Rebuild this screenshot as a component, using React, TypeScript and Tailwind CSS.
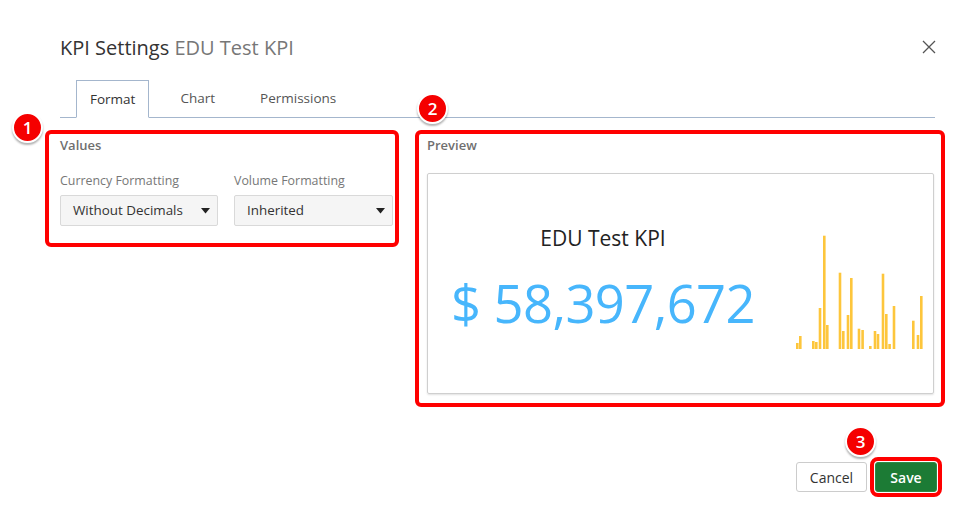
const bars = [
  [796, 342], [799, 335], [812, 340], [815, 341], [818.7, 307], [823, 234.7], [826, 324],
  [838.7, 271.7], [842, 330], [846.7, 314], [850, 277], [857.7, 327.7], [861.3, 329],
  [869, 345], [873.7, 330], [876.7, 333], [881.7, 272.7], [885, 313], [888.3, 343],
  [892.7, 305], [912, 319.7], [916.7, 334], [920, 295],
];

function Badge({ n, className }: { n: number; className: string }) {
  return (
    <div
      className={`absolute w-[31px] h-[31px] rounded-full bg-[#f50000] border-2 border-white shadow-[0_2px_2px_rgba(0,0,0,0.3)] flex items-center justify-center text-white text-[17px] font-semibold leading-none ${className}`}
    >
      {n}
    </div>
  );
}

function Select({ value, width }: { value: string; width: string }) {
  return (
    <div
      className={`${width} h-[31px] flex items-center justify-between pl-3 pr-[7px] bg-[#f5f5f5] border border-[#d9d9d9] rounded-[2px] text-[13.4px] text-[#333]`}
    >
      <span>{value}</span>
      <svg width="9" height="6" viewBox="0 0 9 6">
        <path d="M0 0 L9 0 L4.5 5.5 Z" fill="#222" />
      </svg>
    </div>
  );
}

function BarChart() {
  return (
    <svg width="140" height="120" viewBox="790 230 140 120" className="mt-[57px] ml-[12px]">
      {bars.map(([x, top], i) => (
        <rect key={i} x={x} y={top} width={2.6} height={348 - top} fill="#fdc63c" />
      ))}
    </svg>
  );
}

export default function App() {
  return (
    <div className="relative w-[967px] h-[523px] bg-white overflow-hidden font-['Open_Sans',sans-serif]">
      {/* header */}
      <div className="flex items-center justify-between pl-[60px] pr-[31px] pt-[34px]">
        <h1 className="text-[20px] leading-[28px] text-[#333]">
          KPI Settings <span className="text-[#777]">EDU Test KPI</span>
        </h1>
        <svg width="14" height="14" viewBox="0 0 14 14" className="-mt-[2px]">
          <path d="M1 1 L13 13 M13 1 L1 13" stroke="#555" strokeWidth="1.3" />
        </svg>
      </div>

      {/* tabs */}
      <div className="mt-[17px] ml-[60px] mr-[32px] flex items-end gap-[17px] pl-[16px] border-b border-[#a4b6cd]">
        <div className="px-[13px] py-[8px] leading-[20px] text-[13.5px] text-[#333] bg-white border border-[#a4b6cd] border-b-white -mb-px">
          Format
        </div>
        <div className="px-[13px] py-[8px] leading-[20px] text-[13.5px] text-[#555] border border-transparent">Chart</div>
        <div className="px-[13px] py-[8px] leading-[20px] text-[13.5px] text-[#555] border border-transparent">
          Permissions
        </div>
      </div>

      {/* body */}
      <div className="flex items-start gap-[16px] pl-[45px] mt-[12px]">
        <div className="w-[354px] h-[117px] border-[4px] border-[#ff0000] rounded-[6px] pl-[11px] pt-[2px]">
          <div className="text-[13px] leading-[18px] font-semibold text-[#6f6f6f]">Values</div>
          <div className="flex gap-[16px] mt-[18px]">
            <div className="flex flex-col gap-[5px]">
              <span className="text-[12.4px] leading-[18px] text-[#777]">Currency Formatting</span>
              <Select value="Without Decimals" width="w-[158px]" />
            </div>
            <div className="flex flex-col gap-[5px]">
              <span className="text-[12.4px] leading-[18px] text-[#777]">Volume Formatting</span>
              <Select value="Inherited" width="w-[159px]" />
            </div>
          </div>
        </div>

        <div className="w-[530px] h-[277px] border-[4px] border-[#ff0000] rounded-[6px] pl-[8px] pr-[7px] pt-[2px]">
          <div className="text-[13px] leading-[18px] font-semibold text-[#6f6f6f]">Preview</div>
          <div className="mt-[19px] h-[221px] border border-[#cfcfcf] rounded-[2px] shadow-[0_1px_2px_rgba(0,0,0,0.12)] flex">
            <div className="w-[350px] flex flex-col items-center pt-[50px]">
              <div className="text-[21px] leading-[28px] text-[#222]">EDU Test KPI</div>
              <div className="mt-[25px] text-[52.5px] leading-[52px] tracking-[-0.6px] text-[#47b6fc]">$ 58,397,672</div>
            </div>
            <BarChart />
          </div>
        </div>
      </div>

      {/* footer */}
      <div className="flex justify-end items-center gap-[8px] pr-[30px] mt-[55px]">
        <button className="h-[30px] w-[71px] border border-[#ccc] rounded-[3px] bg-white text-[14px] text-[#333]">
          Cancel
        </button>
        <button className="h-[30px] w-[62px] rounded-[3px] bg-[#1c7b35] border border-[#2f8a45] text-[14px] font-semibold text-white outline-[4px] outline-solid outline-[#ff0000] outline-offset-[1px]">
          Save
        </button>
      </div>

      <Badge n={1} className="left-[12px] top-[112px]" />
      <Badge n={2} className="left-[417px] top-[93px]" />
      <Badge n={3} className="left-[845px] top-[426px]" />
    </div>
  );
}
